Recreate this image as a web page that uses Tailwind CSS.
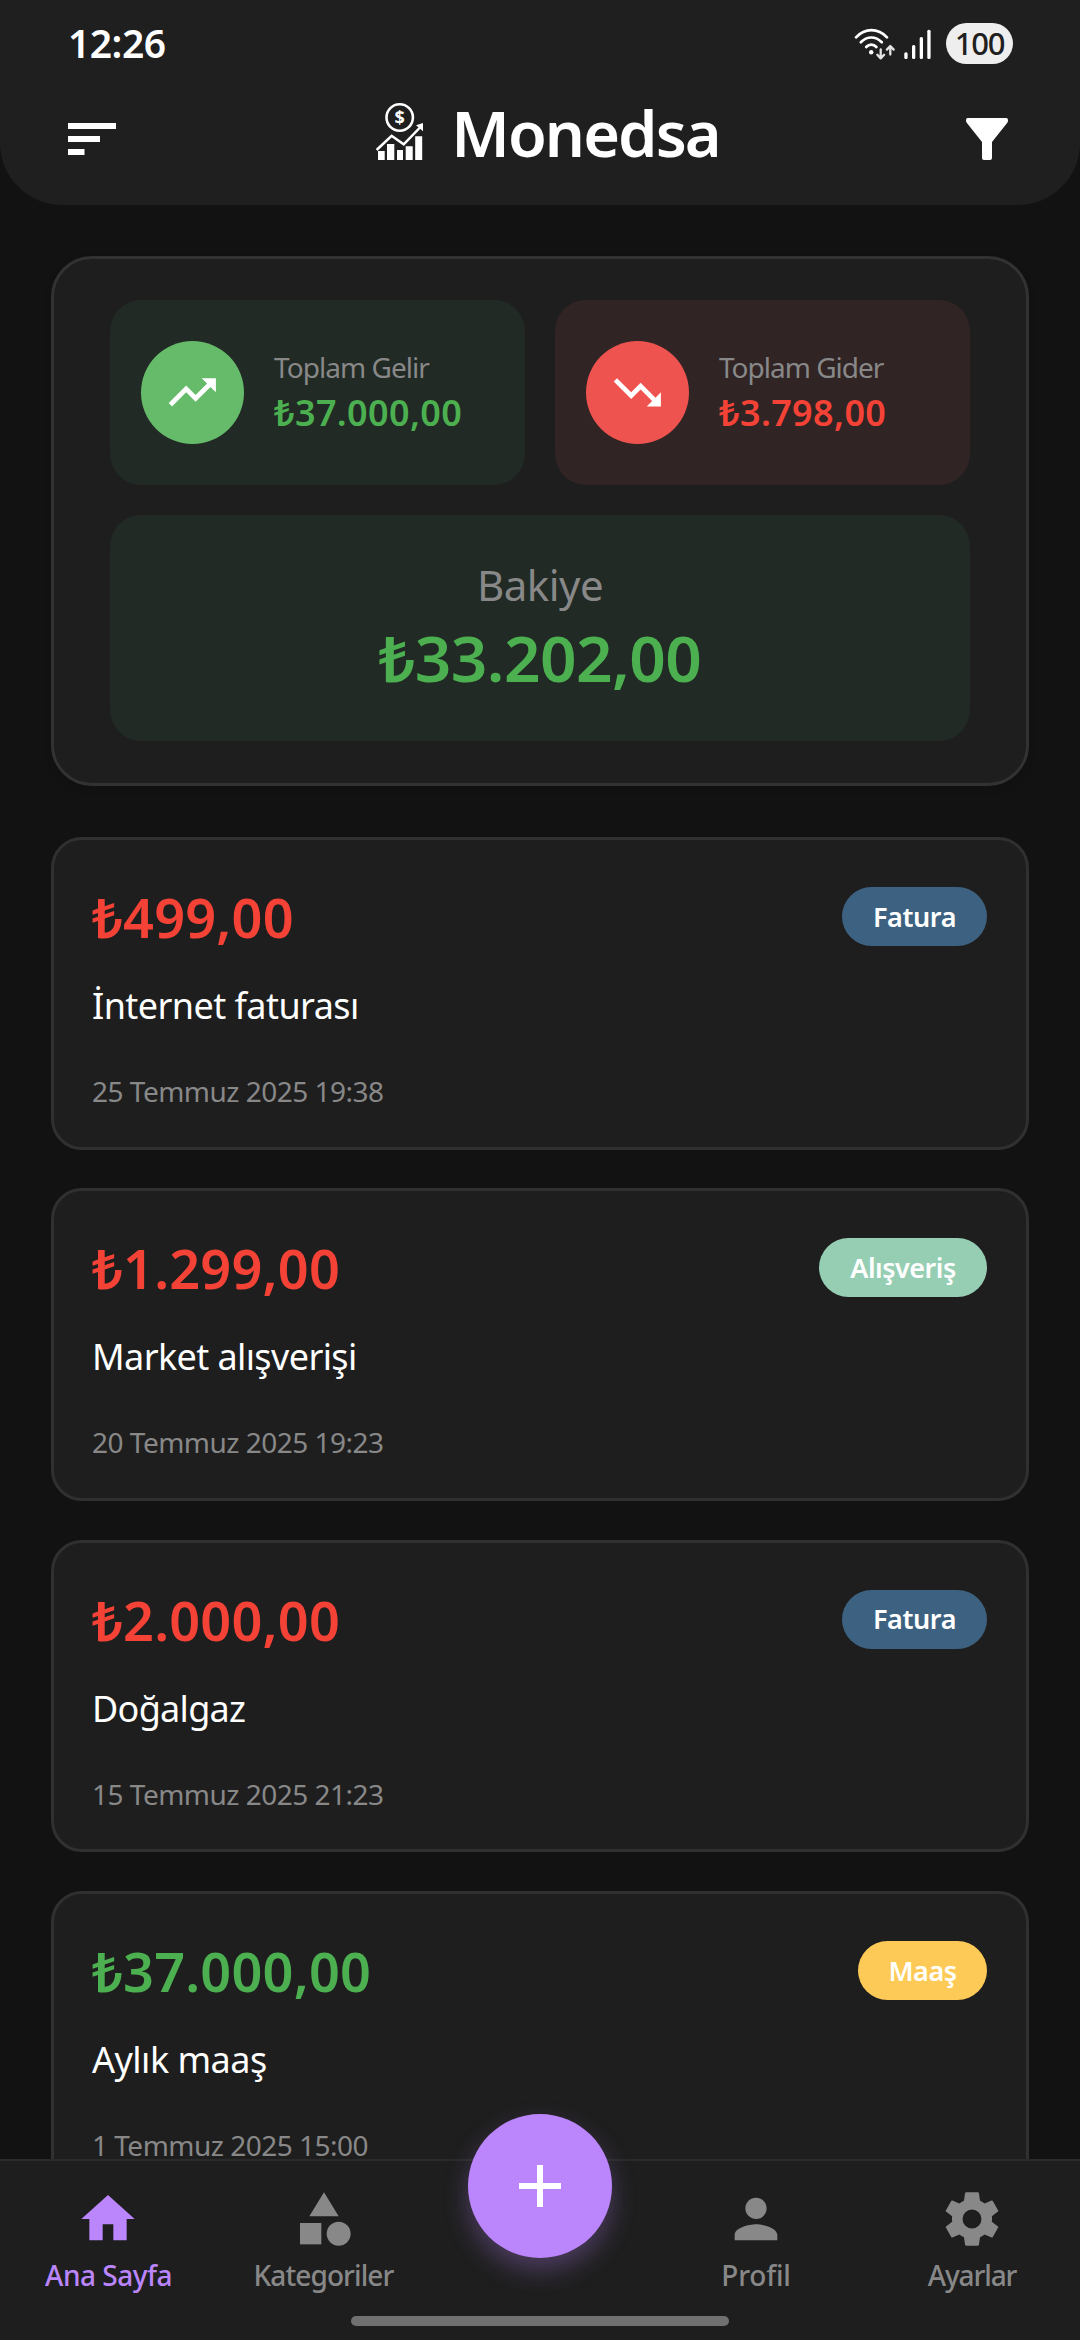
<!DOCTYPE html>
<html lang="tr">
<head>
<meta charset="utf-8">
<title>Monedsa</title>
<script src="https://cdn.jsdelivr.net/npm/@tailwindcss/browser@4"></script>
</head>
<body class="relative flex h-[2340px] w-[1080px] flex-col overflow-hidden bg-[#121212] font-['Noto_Sans',sans-serif] text-white">

<header class="h-[205px] shrink-0 rounded-b-[62px] bg-[#1f1f1f]">
  <!-- status bar -->
  <div class="flex h-[83px] items-center justify-between pr-[67px] pl-[67px]">
    <span class="pt-0.5 pl-px text-[39px] leading-none font-semibold tracking-[-0.5px]">12:26</span>
    <div class="flex items-center gap-3 pt-1">
      <svg width="80" height="34" viewBox="854 26 80 34" fill="none" stroke="#fff" stroke-linecap="round" stroke-linejoin="round">
        <path stroke-width="2.7" d="M856 36.3c9-9.6 22-9.6 31 0M860.8 41.3c6.200-6.400 14.800-6.400 21 0M866.200 46c3-3.200 7.200-3.200 10.200 0"/>
        <circle cx="871.2" cy="51.300" r="2.200" fill="#fff" stroke="none"/>
        <path stroke-width="2.300" stroke="#e4e4e4" d="M880.700 48.500v8.500M877.300 53.800l3.400 3.600 3.400-3.600M890.300 53.500v-8.300M886.900 48.600l3.400-3.600 3.400 3.600"/>
        <g fill="#fff" stroke="none">
          <rect x="904.300" y="51.300" width="3.300" height="6.700" rx="1.500"/>
          <rect x="912" y="44" width="3.300" height="14" rx="1.500"/>
          <rect x="919.700" y="36" width="3.300" height="22" rx="1.500"/>
          <rect x="927.300" y="28.700" width="3.300" height="29.300" rx="1.500"/>
        </g>
      </svg>
      <span class="flex h-[41px] w-[67px] items-center justify-center rounded-full bg-[#eeeeee] pb-px text-[31px] leading-none font-medium tracking-[-1.2px] text-[#1f1f1f]">100</span>
    </div>
  </div>
  <!-- title bar -->
  <div class="flex h-24 items-center justify-between pr-[72px] pl-[68px]">
    <svg class="mt-4" width="48" height="32" viewBox="0 0 48 32" fill="#fff"><path d="M0 0h48v6H0zM0 13h32v6H0zM0 26h16.500v6H0z"/></svg>
    <div class="flex items-center gap-7 pl-3.5">
      <svg width="47" height="57" viewBox="0 0 47 57" fill="none" stroke="#fff">
        <circle cx="23.700" cy="14.500" r="13.200" stroke-width="2.600"/>
        <text x="23.700" y="21" text-anchor="middle" font-size="18" font-weight="700" fill="#fff" stroke="none">$</text>
        <path stroke-width="2.500" d="M.6 47 15.600 32.800 27.700 41.300 44 24.500"/>
        <path fill="#fff" stroke="none" d="M40 22.200 47 20v8.200zM2 48h6.700v9H2zM11 41h7.300v16H11zM21 47h6v10h-6zM29.700 43.300h7V57h-7zM39.200 33.300h7V57h-7z"/>
      </svg>
      <h1 class="pt-0.5 text-[63px] leading-none font-semibold tracking-[-1.9px]">Monedsa</h1>
    </div>
    <svg class="mt-4" width="42" height="42" viewBox="0 0 42 42" fill="#fff"><path d="M1.800 0h38.400q1.800 0 1.800 2v.8q0 1-.7 2L26 24v16q0 2-2 2h-6q-2 0-2-2V24L.7 4.800q-.7-1-.7-2V2q0-2 1.800-2z"/></svg>
  </div>
</header>

<main class="flex shrink-0 flex-col px-[51px] pt-[51px]">
  <!-- totals -->
  <section class="grid grid-cols-2 gap-[30px] rounded-[41px] border-3 border-[#323232] bg-[#1e1e1e] px-14 pt-[41px] pb-[41.5px] shadow-[0_3px_8px_rgba(0,0,0,0.12)]">
    <div class="flex h-[185px] items-center gap-[30px] rounded-[31px] bg-[#212a24] pl-[31px]">
      <div class="flex size-[103px] items-center justify-center rounded-full bg-[#66bb6a]">
        <svg width="56.600" height="56.600" viewBox="0 0 24 24" fill="#fff"><path d="M16 6l2.290 2.290-4.880 4.880-4-4L2 16.590 3.410 18l6-6 4 4 6.300-6.290L22 12V6z"/></svg>
      </div>
      <div class="flex flex-col">
        <span class="text-[28px] leading-10 tracking-[-0.95px] text-[#888]">Toplam Gelir</span>
        <span class="pt-px text-[36px] leading-[50px] font-semibold tracking-[0.35px] text-[#4caf50]">₺37.000,00</span>
      </div>
    </div>
    <div class="flex h-[185px] items-center gap-[30px] rounded-[31px] bg-[#302424] pl-[31px]">
      <div class="flex size-[103px] items-center justify-center rounded-full bg-[#ef5350]">
        <svg width="56.600" height="56.600" viewBox="0 0 24 24" fill="#fff"><path d="M16 18l2.290-2.290-4.880-4.880-4 4L2 7.410 3.410 6l6 6 4-4 6.300 6.290L22 12v6z"/></svg>
      </div>
      <div class="flex flex-col">
        <span class="text-[28px] leading-10 tracking-[-1px] text-[#888]">Toplam Gider</span>
        <span class="pt-px text-[36px] leading-[50px] font-semibold tracking-[0.35px] text-[#f44336]">₺3.798,00</span>
      </div>
    </div>
    <div class="col-span-2 flex h-[226px] flex-col items-center justify-center rounded-[31px] bg-[#212a24]">
      <span class="text-[42px] leading-[58px] tracking-[-0.5px] text-[#888]">Bakiye</span>
      <span class="pt-px text-[64px] leading-[86px] font-semibold tracking-[-0.6px] text-[#4caf50]">₺33.202,00</span>
    </div>
  </section>

  <!-- transactions -->
  <div class="mt-[51.500px] flex flex-col gap-[38.700px]">
    <article class="h-[312.600px] rounded-[31px] border-3 border-[#303030] bg-[#1e1e1e] pt-[38px] pr-[39px] pl-[38px]">
      <div class="flex items-center justify-between">
        <span class="pt-0.5 text-[54px] leading-[75px] font-semibold tracking-[0.2px] text-[#f44336]">₺499,00</span>
        <span class="flex h-[59px] w-[145px] items-center justify-center rounded-full bg-[#3d6281] pt-px text-[27px] font-semibold tracking-[-0.4px]">Fatura</span>
      </div>
      <p class="mt-[26px] text-[36px] leading-[50px] tracking-[-0.56px]">İnternet faturası</p>
      <p class="mt-[41px] text-[28px] leading-[38px] tracking-[-0.51px] text-[#888]">25 Temmuz 2025 19:38</p>
    </article>
    <article class="h-[312.600px] rounded-[31px] border-3 border-[#303030] bg-[#1e1e1e] pt-[38px] pr-[39px] pl-[38px]">
      <div class="flex items-center justify-between">
        <span class="pt-0.5 text-[54px] leading-[75px] font-semibold tracking-[0.2px] text-[#f44336]">₺1.299,00</span>
        <span class="flex h-[59px] w-[168px] items-center justify-center rounded-full bg-[#96ceb4] pt-px text-[27px] font-semibold tracking-[-0.5px]">Alışveriş</span>
      </div>
      <p class="mt-[26px] text-[36px] leading-[50px] tracking-[-0.6px]">Market alışverişi</p>
      <p class="mt-[41px] text-[28px] leading-[38px] tracking-[-0.51px] text-[#888]">20 Temmuz 2025 19:23</p>
    </article>
    <article class="h-[312.600px] rounded-[31px] border-3 border-[#303030] bg-[#1e1e1e] pt-[38px] pr-[39px] pl-[38px]">
      <div class="flex items-center justify-between">
        <span class="pt-0.5 text-[54px] leading-[75px] font-semibold tracking-[0.2px] text-[#f44336]">₺2.000,00</span>
        <span class="flex h-[59px] w-[145px] items-center justify-center rounded-full bg-[#3d6281] pt-px text-[27px] font-semibold tracking-[-0.4px]">Fatura</span>
      </div>
      <p class="mt-[26px] text-[36px] leading-[50px] tracking-[-0.7px]">Doğalgaz</p>
      <p class="mt-[41px] text-[28px] leading-[38px] tracking-[-0.51px] text-[#888]">15 Temmuz 2025 21:23</p>
    </article>
    <article class="h-[312.600px] rounded-[31px] border-3 border-[#303030] bg-[#1e1e1e] pt-[38px] pr-[39px] pl-[38px]">
      <div class="flex items-center justify-between">
        <span class="pt-0.5 text-[54px] leading-[75px] font-semibold tracking-[0.2px] text-[#4caf50]">₺37.000,00</span>
        <span class="flex h-[59px] w-[129px] items-center justify-center rounded-full bg-[#feca57] pt-px text-[27px] font-semibold tracking-[-0.5px]">Maaş</span>
      </div>
      <p class="mt-[26px] text-[36px] leading-[50px] tracking-[-0.51px]">Aylık maaş</p>
      <p class="mt-[41px] text-[28px] leading-[38px] tracking-[-0.51px] text-[#888]">1 Temmuz 2025 15:00</p>
    </article>
  </div>
</main>

<!-- bottom navigation, over the scrolling list -->
<nav class="absolute bottom-0 left-0 grid h-[181px] w-full grid-cols-5 border-t-2 border-[#2a2a2a] bg-[#1e1e1e] pt-[26px] text-[28px] leading-[38px] font-medium text-[#888]">
  <a class="flex flex-col items-center gap-[5px] tracking-[-0.5px] text-[#bb86fc]">
    <svg width="64" height="64" viewBox="0 0 24 24" fill="currentColor"><path d="M10 20v-6h4v6h5v-8h3L12 3 2 12h3v8z"/></svg>
    <span class="pl-px">Ana Sayfa</span>
  </a>
  <a class="flex flex-col items-center gap-[5px] tracking-[-0.9px]">
    <svg width="64" height="64" viewBox="0 0 24 24" fill="currentColor"><path d="M12 2l-5.500 9h11z"/><circle cx="17.500" cy="17.500" r="4.500"/><path d="M3 13.500h8v8H3z"/></svg>
    <span class="pr-px">Kategoriler</span>
  </a>
  <button class="col-start-3 mx-auto -mt-[73px] flex size-36 items-center justify-center rounded-full bg-[#bb86fc] shadow-[0_12px_26px_rgba(187,134,252,0.3)]">
    <svg width="42" height="42" viewBox="0 0 42 42" fill="#fff"><path d="M18 0h6v18h18v6H24v18h-6V24H0v-6h18z"/></svg>
  </button>
  <a class="flex flex-col items-center gap-[5px] tracking-[-0.2px]">
    <svg width="64" height="64" viewBox="0 0 24 24" fill="currentColor"><path d="M12 12c2.210 0 4-1.790 4-4s-1.790-4-4-4-4 1.790-4 4 1.790 4 4 4zm0 2c-2.670 0-8 1.340-8 4v2h16v-2c0-2.660-5.330-4-8-4z"/></svg>
    <span>Profil</span>
  </a>
  <a class="flex flex-col items-center gap-[5px] tracking-[-1.1px]">
    <svg width="64" height="64" viewBox="0 0 24 24" fill="currentColor"><path d="M19.440 12.990c.04-.32.070-.65.070-.99s-.03-.67-.07-.99l2.300-1.830q.2-.16.080-.38l-2.080-3.600q-.12-.22-.36-.14l-2.660 1.100c-.52-.4-1.090-.74-1.710-1L14.600 2.300Q14.550 2 14.250 2h-4.500q-.3 0-.35.3l-.41 2.860c-.62.26-1.190.6-1.710 1l-2.660-1.100q-.24-.08-.36.14L2.180 8.800q-.12.220.080.380l2.300 1.830c-.04.320-.07.650-.07.990s.03.670.07.990l-2.300 1.830q-.2.160-.08.380l2.080 3.600q.12.220.36.140l2.660-1.100c.52.4 1.090.74 1.710 1l.41 2.860q.05.3.35.3h4.500q.3 0 .35-.3l.41-2.860c.62-.26 1.190-.6 1.710-1l2.660 1.100q.24.080.36-.14l2.080-3.600q.12-.22-.08-.38zM12 15.550a3.550 3.550 0 1 1 0-7.100 3.550 3.550 0 0 1 0 7.100z"/></svg>
    <span>Ayarlar</span>
  </a>
</nav>
<div class="absolute bottom-[14px] left-[351px] h-[10px] w-[378px] rounded-full bg-[#707070]"></div>
</body>
</html>
